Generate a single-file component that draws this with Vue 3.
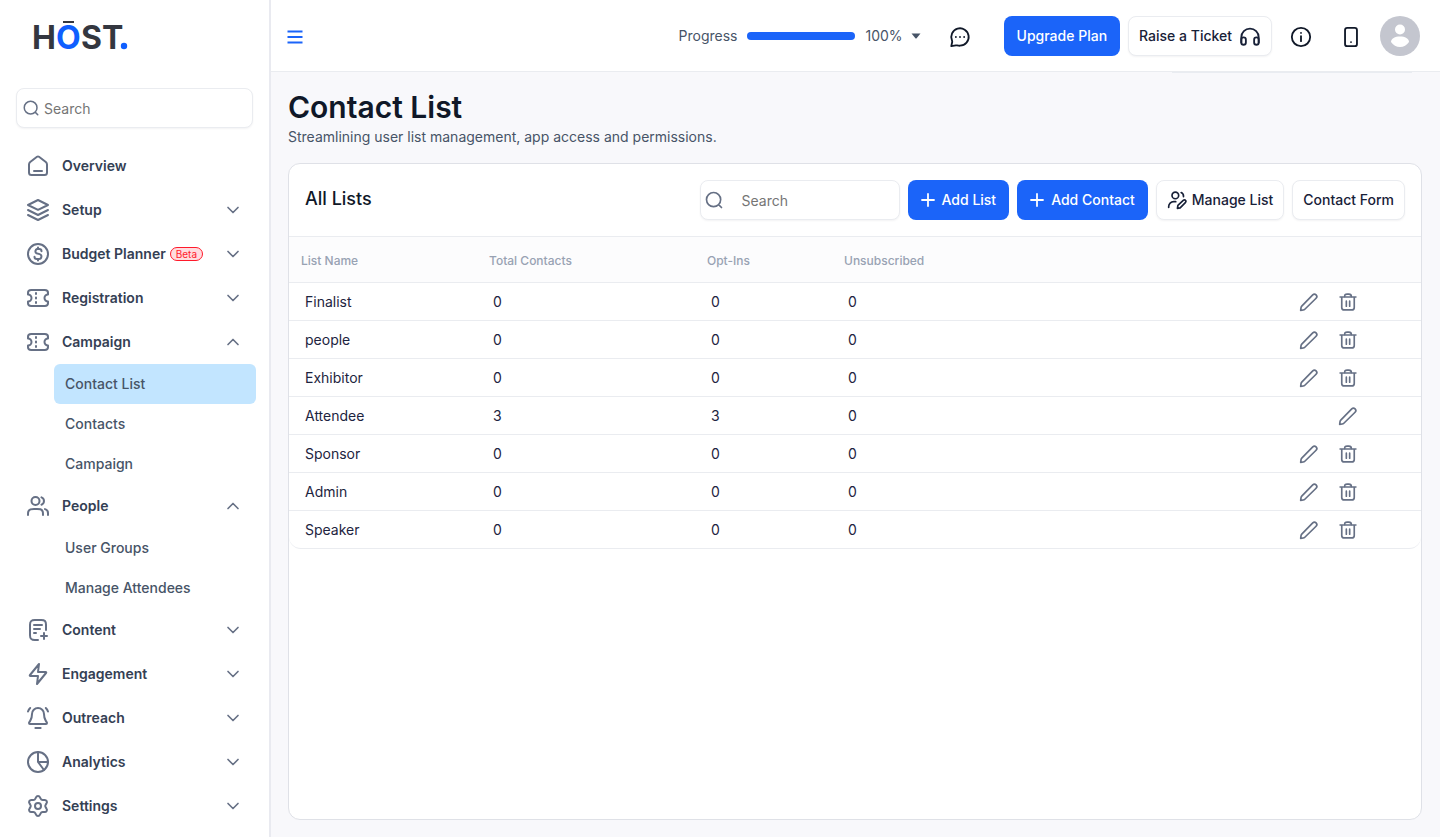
<template>
  <div class="layout">
    <aside class="sidebar">
      <a href="#" class="logo" aria-label="HŌST.">
        <svg width="112" height="48" viewBox="0 0 112 48">
          <rect x="37" y="5" width="11" height="2" class="logo-ink" />
          <text x="6" y="33" class="logo-ink">H</text>
          <text x="30" y="33" class="logo-accent">O</text>
          <text x="55" y="33" class="logo-ink">ST</text>
          <circle cx="98" cy="30" r="3.2" class="logo-accent" />
        </svg>
      </a>

      <div class="search side-search">
        <svg class="icon icon-sm" viewBox="0 0 24 24"><path :d="icons.search[0]" /></svg>
        <input type="text" placeholder="Search" aria-label="Search menu">
      </div>

      <nav>
        <ul class="menu">
          <li v-for="item in menu" :key="item.label">
            <button type="button" class="menu-item" @click="toggle(item)">
              <svg class="icon" viewBox="0 0 24 24">
                <path v-for="d in icons[item.icon]" :key="d" :d="d" />
              </svg>
              <span>{{ item.label }}</span>
              <span v-if="item.badge" class="badge">{{ item.badge }}</span>
              <svg v-if="item.expandable" class="icon chevron" viewBox="0 0 24 24">
                <path :d="item.open ? 'M18 15l-6-6-6 6' : 'M6 9l6 6 6-6'" />
              </svg>
            </button>
            <ul v-if="item.open" class="submenu">
              <li v-for="child in item.children" :key="child">
                <a href="#" :class="{ active: child === activePage }" @click.prevent="activePage = child">{{ child }}</a>
              </li>
            </ul>
          </li>
        </ul>
      </nav>
    </aside>

    <div class="content">
      <header class="topbar">
        <button type="button" class="burger" aria-label="Toggle menu">
          <svg class="icon" viewBox="0 0 24 24"><path :d="icons.burger[0]" /></svg>
        </button>

        <div class="progress">
          <span>Progress</span>
          <div class="progress-track">
            <div class="progress-bar" :style="{ width: progress + '%' }"></div>
          </div>
          <button type="button" class="progress-toggle">
            {{ progress }}%
            <svg width="10" height="6" viewBox="0 0 10 6"><path d="M.5 .5h9L5.6 5.2q-.6.6-1.200 0z" fill="currentColor" /></svg>
          </button>
        </div>

        <button type="button" class="icon-btn chat" aria-label="Messages">
          <svg class="icon" viewBox="0 0 24 24">
            <path v-for="d in icons.chat" :key="d" :d="d" />
          </svg>
        </button>
        <button type="button" class="btn btn-primary">Upgrade Plan</button>
        <button type="button" class="btn btn-light">
          Raise a Ticket
          <svg class="icon headphones" viewBox="0 0 24 24">
            <path v-for="d in icons.headphones" :key="d" :d="d" />
          </svg>
        </button>
        <button type="button" class="icon-btn" aria-label="Information">
          <svg class="icon" viewBox="0 0 24 24">
            <path v-for="d in icons.info" :key="d" :d="d" />
          </svg>
        </button>
        <button type="button" class="icon-btn" aria-label="Mobile app">
          <svg class="icon" viewBox="0 0 24 24">
            <path v-for="d in icons.phone" :key="d" :d="d" />
          </svg>
        </button>
        <button type="button" class="avatar" aria-label="Account">
          <svg width="40" height="40" viewBox="0 0 40 40">
            <circle cx="20" cy="20" r="20" fill="#c4c6cf" />
            <circle cx="20" cy="13.5" r="5" fill="#fff" />
            <path d="M11 26c0-3.500 4-5.500 9-5.500s9 2 9 5.500c-2 3-5.500 5-9 5s-7-2-9-5z" fill="#fff" />
          </svg>
        </button>
        <div class="account-menu"></div>
      </header>

      <main>
        <h1>Contact List</h1>
        <p class="subtitle">Streamlining user list management, app access and permissions.</p>

        <section class="card">
          <div class="card-header">
            <h2>All Lists</h2>
            <div class="search list-search">
              <svg class="icon" viewBox="0 0 24 24"><path :d="icons.search[0]" /></svg>
              <input type="text" v-model="query" placeholder="Search" aria-label="Search lists">
            </div>
            <button type="button" class="btn btn-primary add">
              <svg class="icon" viewBox="0 0 24 24"><path :d="icons.plus[0]" /></svg>
              Add List
            </button>
            <button type="button" class="btn btn-primary add">
              <svg class="icon" viewBox="0 0 24 24"><path :d="icons.plus[0]" /></svg>
              Add Contact
            </button>
            <button type="button" class="btn btn-light manage">
              <svg class="icon" viewBox="0 0 24 24">
                <path v-for="d in icons.userEdit" :key="d" :d="d" />
              </svg>
              Manage List
            </button>
            <button type="button" class="btn btn-light">Contact Form</button>
          </div>

          <table>
            <thead>
              <tr>
                <th class="col-name">List Name</th>
                <th class="col-total">Total Contacts</th>
                <th class="col-opt">Opt-Ins</th>
                <th>Unsubscribed</th>
                <th class="col-actions"></th>
              </tr>
            </thead>
            <tbody>
              <tr v-for="list in filteredLists" :key="list.name">
                <td>{{ list.name }}</td>
                <td>{{ list.total }}</td>
                <td>{{ list.optIns }}</td>
                <td>{{ list.unsubscribed }}</td>
                <td>
                  <div class="actions">
                    <button type="button" :aria-label="'Edit ' + list.name">
                      <svg class="icon" viewBox="0 0 24 24"><path :d="icons.pencil[0]" /></svg>
                    </button>
                    <button v-if="!list.locked" type="button" :aria-label="'Delete ' + list.name">
                      <svg class="icon" viewBox="0 0 24 24">
                        <path v-for="d in icons.trash" :key="d" :d="d" />
                      </svg>
                    </button>
                  </div>
                </td>
              </tr>
            </tbody>
          </table>
        </section>
      </main>
    </div>
  </div>
</template>

<script setup>
import { ref, computed } from 'vue'

const icons = {
  search: ['M21 21l-3.5-3.5M20 11.5a8.5 8.5 0 1 1-17 0 8.5 8.5 0 0 1 17 0z'],
  burger: ['M3 5.5h18M3 12h18M3 18.5h18'],
  plus: ['M12 4v16M4 12h16'],
  home: [
    'M8 17h8',
    'M11 2.8L4.2 8C3.400 8.700 3 9.300 3 10.500V18.500C3 20.200 3.800 21 5.500 21h13c1.700 0 2.500-.8 2.500-2.500v-8c0-1.200-.4-1.800-1.200-2.500L13 2.800c-.8-.6-1.200-.6-2 0z'
  ],
  layers: [
    'M12 2L2 7l10 4.8L22 7z',
    'M2 12l10 5 10-5',
    'M2 17l10 5 10-5'
  ],
  dollar: [
    'M22 12a10 10 0 1 1-20 0 10 10 0 0 1 20 0z',
    'M8.5 14.7c0 1.300 1 2.300 2.300 2.300H13a2.500 2.500 0 0 0 .6-4.900l-3.200-.8A2.500 2.500 0 0 1 11 7h2.200c1.300 0 2.300 1 2.300 2.300M12 5.500V7m0 10v1.500'
  ],
  ticket: [
    'M10 8V7m0 5.500v-1m0 5.500v-1',
    'M5.2 4h13.600c2.200 0 3.200.8 3.200 2.700v1.800a3.500 3.500 0 0 0 0 7v1.800c0 1.900-1 2.700-3.200 2.700H5.200C3 20 2 19.200 2 17.300v-1.800a3.500 3.500 0 0 0 0-7V6.700C2 4.800 3 4 5.200 4z'
  ],
  users: [
    'M22 21v-2a4 4 0 0 0-3-3.900M15.5 3.300a4 4 0 0 1 0 7.400M17 21c0-1.900 0-2.800-.3-3.500a4 4 0 0 0-2.200-2.200c-.7-.3-1.600-.3-3.500-.3H8c-1.900 0-2.800 0-3.500.3a4 4 0 0 0-2.200 2.200C2 18.200 2 19.100 2 21M13.500 7a4 4 0 1 1-8 0 4 4 0 0 1 8 0z'
  ],
  filePlus: [
    'M20 12V6.800C20 3.200 18.800 2 15.200 2H8.800C5.200 2 4 3.200 4 6.800v10.400C4 20.800 5.200 22 8.800 22H12',
    'M14 11H8m2 4H8m8-8H8M18 21v-6m-3 3h6'
  ],
  zap: ['M13 2L4 13c-.5.6-.3 1 .4 1H12l-1 8 9-11c.5-.6.3-1-.4-1H12z'],
  bell: [
    'M9.400 22h5.200',
    'M22 5.500A8 8 0 0 0 19.800 2M2 5.500A8 8 0 0 1 4.200 2',
    'M18 8A6 6 0 0 0 6 8c0 3.100-.8 5.200-1.700 6.600-1 1.600-1.400 2-1.300 2.500 0 .6.2.9 1 .9h16c.8 0 1-.3 1-.9.1-.5-.3-.9-1.300-2.500C18.800 13.200 18 11.100 18 8z'
  ],
  pie: [
    'M22 12a10 10 0 1 1-20 0 10 10 0 0 1 20 0z',
    'M12 2v10h10M12 12l6 8'
  ],
  settings: [
    'M15 12a3 3 0 1 1-6 0 3 3 0 0 1 6 0z',
    'M9.400 19.400l.6 1.300a2.200 2.200 0 0 0 4 0l.6-1.300a2.400 2.400 0 0 1 2.500-1.400l1.400.1a2.200 2.200 0 0 0 2-3.500l-.8-1.200a2.400 2.400 0 0 1 0-2.800l.8-1.200a2.200 2.200 0 0 0-2-3.500l-1.400.1a2.400 2.400 0 0 1-2.500-1.400L14 3.300a2.200 2.200 0 0 0-4 0l-.6 1.300A2.400 2.400 0 0 1 6.900 6l-1.400-.1a2.200 2.200 0 0 0-2 3.500l.8 1.200a2.400 2.400 0 0 1 0 2.800l-.8 1.200a2.200 2.200 0 0 0 2 3.500l1.400-.1a2.400 2.400 0 0 1 2.500 1.400z'
  ],
  chat: [
    'M7.500 12h.01M12 12h.01M16.500 12h.01',
    'M12 21.500a9.500 9.500 0 1 0-8.700-5.600c.3.700.3 1 .2 1.500l-1 4.600 5-.9c.5-.1.8 0 1.300.1 1 .2 2 .3 3.200.3z'
  ],
  headphones: [
    'M2.500 19v-5.500a9.500 9.500 0 0 1 19 0V19',
    'M5 13.500c1.600 0 2.500.9 2.500 2.500v3c0 1.600-.9 2.500-2.500 2.500S2.500 20.600 2.500 19v-3c0-1.600.9-2.500 2.500-2.500zM19 13.500c1.600 0 2.500.9 2.500 2.500v3c0 1.600-.9 2.500-2.500 2.500s-2.500-.9-2.500-2.500v-3c0-1.600.9-2.500 2.500-2.500z'
  ],
  info: ['M12 16.500V11M12 7.500h.01', 'M22 12a10 10 0 1 1-20 0 10 10 0 0 1 20 0z'],
  phone: ['M12 17.500h.01', 'M8 2h8q2.500 0 2.500 2.500v15q0 2.500-2.500 2.500H8q-2.500 0-2.500-2.500v-15Q5.500 2 8 2z'],
  userEdit: [
    'M2 21v-1a6 6 0 0 1 6-6h2.500M14 6.500a4 4 0 1 1-8 0 4 4 0 0 1 8 0zM17 3c2 .8 3 2.500 2.800 5',
    'M12.500 22l.6-3.500 6.400-6c1-.9 2-.9 2.700-.1.8.8.7 1.800-.2 2.700L15.800 21.500z'
  ],
  pencil: ['M2 22l.4-3c.1-.9.3-1.400.9-2L16.500 3.500a2.600 2.600 0 0 1 4 4L7 20.700c-.6.6-1.100.8-2 .9z'],
  trash: [
    'M8 5.500C8 3.200 8.700 2.500 11 2.500h2c2.300 0 3 .7 3 3',
    'M2.500 6h19M4.500 6v12.500c0 2 1 3 3 3h9c2 0 3-1 3-3V6M10 11v6M14 11v6'
  ]
}

const menu = ref([
  { label: 'Overview', icon: 'home' },
  { label: 'Setup', icon: 'layers', expandable: true },
  { label: 'Budget Planner', icon: 'dollar', badge: 'Beta', expandable: true },
  { label: 'Registration', icon: 'ticket', expandable: true },
  {
    label: 'Campaign',
    icon: 'ticket',
    expandable: true,
    open: true,
    children: ['Contact List', 'Contacts', 'Campaign']
  },
  {
    label: 'People',
    icon: 'users',
    expandable: true,
    open: true,
    children: ['User Groups', 'Manage Attendees']
  },
  { label: 'Content', icon: 'filePlus', expandable: true },
  { label: 'Engagement', icon: 'zap', expandable: true },
  { label: 'Outreach', icon: 'bell', expandable: true },
  { label: 'Analytics', icon: 'pie', expandable: true },
  { label: 'Settings', icon: 'settings', expandable: true }
])

const lists = ref([
  { name: 'Finalist', total: 0, optIns: 0, unsubscribed: 0 },
  { name: 'people', total: 0, optIns: 0, unsubscribed: 0 },
  { name: 'Exhibitor', total: 0, optIns: 0, unsubscribed: 0 },
  { name: 'Attendee', total: 3, optIns: 3, unsubscribed: 0, locked: true },
  { name: 'Sponsor', total: 0, optIns: 0, unsubscribed: 0 },
  { name: 'Admin', total: 0, optIns: 0, unsubscribed: 0 },
  { name: 'Speaker', total: 0, optIns: 0, unsubscribed: 0 }
])

const activePage = ref('Contact List')
const progress = ref(100)
const query = ref('')

const filteredLists = computed(() =>
  lists.value.filter((list) => list.name.toLowerCase().includes(query.value.toLowerCase()))
)

const toggle = (item) => {
  if (item.expandable) {
    item.open = !item.open
  }
}
</script>

<style>
body {
  background: #f8f8fb;
}
</style>

<style scoped>
* {
  box-sizing: border-box;
}

.layout {
  display: flex;
  min-height: 100vh;
  font-family: Inter, sans-serif;
  font-size: 14px;
  line-height: 20px;
  color: #101828;
}

button,
input {
  font: inherit;
  color: inherit;
}

button {
  padding: 0;
  border: none;
  background: none;
  cursor: pointer;
}

ul {
  list-style: none;
  margin: 0;
  padding: 0;
}

.icon {
  flex: none;
  width: 24px;
  height: 24px;
  fill: none;
  stroke: currentColor;
  stroke-width: 2;
  stroke-linecap: round;
  stroke-linejoin: round;
}

/* Sidebar */
.sidebar {
  flex: none;
  width: 271px;
  padding: 16px 16px 9px;
  background: #fff;
  border-right: 2px solid #e9eaf0;
}

.logo {
  display: block;
  height: 56px;
  margin: 0 0 16px 10px;
}

.logo svg {
  display: block;
}

.logo text {
  font-size: 32px;
  font-weight: 700;
}

.logo-ink {
  fill: #343740;
}

.logo-accent {
  fill: #0f5fff;
}

.search {
  display: flex;
  align-items: center;
  height: 40px;
  border: 1px solid #eaecf0;
  border-radius: 8px;
  background: #fff;
  color: #667085;
  box-shadow: 0 1px 2px rgba(16, 24, 40, 0.05);
}

.search input {
  flex: 1;
  min-width: 0;
  padding: 2px 0 0;
  border: none;
  outline: none;
  background: none;
}

.search input::placeholder {
  color: #757575;
}

.side-search {
  gap: 4px;
  margin-bottom: 16px;
  padding: 0 5px;
}

.icon-sm {
  width: 18px;
  height: 18px;
}

.menu-item {
  display: flex;
  align-items: center;
  width: 100%;
  height: 44px;
  padding: 0 10px;
  font-weight: 600;
  color: #344054;
}

.menu-item .icon {
  margin-right: 12px;
  color: #667085;
}

.menu-item .chevron {
  width: 20px;
  height: 20px;
  margin: 0 0 0 auto;
}

.badge {
  margin-left: 4px;
  padding: 0 5px;
  border: 1px solid #ff1a2b;
  border-radius: 8px;
  background: #ffdcdf;
  color: #ff1a2b;
  font-size: 10px;
  font-weight: 400;
  line-height: 12px;
}

.submenu {
  margin: 0 -3px 0 38px;
}

.submenu a {
  display: block;
  height: 40px;
  padding: 10px 11px;
  border-radius: 6px;
  color: #475467;
  font-weight: 500;
  text-decoration: none;
}

.submenu a.active {
  background: #c2e5ff;
}

/* Top bar */
.content {
  flex: 1;
  min-width: 0;
  display: flex;
  flex-direction: column;
}

.topbar {
  position: relative;
  display: flex;
  align-items: center;
  gap: 8px;
  height: 72px;
  padding: 0 20px 0 14px;
  background: #fff;
  border-bottom: 1px solid #eaecf0;
}

.burger {
  display: flex;
  margin-right: auto;
  padding-top: 2px;
  color: #1b64f9;
}

.burger .icon {
  width: 20px;
  height: 20px;
  stroke-width: 2.4;
  stroke-linecap: butt;
}

.progress {
  display: flex;
  align-items: center;
  gap: 10px;
  margin-right: 10px;
  color: #475467;
}

.progress-track {
  width: 108px;
  height: 8px;
  border-radius: 4px;
  background: #eaecf0;
}

.progress-bar {
  height: 8px;
  border-radius: 4px;
  background: #1b64f9;
}

.progress-toggle {
  display: flex;
  align-items: center;
  gap: 8px;
}

.icon-btn {
  display: flex;
  align-items: center;
  justify-content: center;
  width: 42px;
  height: 40px;
  padding-top: 2px;
}

.icon-btn .icon {
  width: 22px;
  height: 22px;
}

.chat {
  margin-right: 15px;
}

.avatar {
  display: flex;
}

.account-menu {
  position: absolute;
  top: 72px;
  right: 28px;
  width: 240px;
  height: 1px;
  background: #e9ecf1;
}

.btn {
  display: flex;
  align-items: center;
  height: 40px;
  border-radius: 8px;
  font-weight: 500;
  white-space: nowrap;
}

.btn-primary {
  padding: 0 13px;
  background: #1b64f9;
  color: #fff;
}

.btn-light {
  gap: 7px;
  padding: 0 10px;
  border: 1px solid #eaecf0;
  background: #fff;
  color: #182138;
  box-shadow: 0 1px 2px rgba(16, 24, 40, 0.05);
}

.headphones {
  width: 22px;
  height: 22px;
}

.add {
  gap: 5px;
  padding-left: 11px;
}

.add .icon {
  width: 18px;
  height: 18px;
  stroke-width: 2.4;
}

.manage {
  gap: 5px;
}

.manage .icon {
  width: 20px;
  height: 20px;
}

/* Page */
main {
  flex: 1;
  display: flex;
  flex-direction: column;
  padding: 16px 18px 17px 17px;
}

h1 {
  margin: 0;
  font-size: 30px;
  line-height: 38px;
  font-weight: 600;
}

.subtitle {
  margin: 1px 0 16px;
  color: #475467;
}

.card {
  flex: 1;
  border: 1px solid #dfe1e7;
  border-radius: 12px;
  background: #fff;
  overflow: hidden;
}

.card-header {
  display: flex;
  align-items: center;
  gap: 8px;
  padding: 16px;
}

h2 {
  margin: 0 auto 0 0;
  padding-bottom: 2px;
  font-size: 18px;
  line-height: 28px;
  font-weight: 500;
}

.list-search {
  width: 200px;
}

.list-search .icon {
  width: 20px;
  height: 20px;
  margin: 0 18px 0 3px;
}

table {
  width: 100%;
  table-layout: fixed;
  border-spacing: 0;
  border-bottom: 1px solid #eaecf0;
  border-radius: 0 0 12px 12px;
}

th {
  height: 46px;
  padding: 2px 12px 0;
  border-top: 1px solid #eaecf0;
  background: #fcfcfd;
  color: #98a2b3;
  font-size: 12px;
  font-weight: 500;
  text-align: left;
}

td {
  height: 38px;
  padding: 0 16px;
  border-top: 1px solid #eaecf0;
  color: #1d2440;
}

.col-name {
  width: 188px;
}

.col-total {
  width: 218px;
}

.col-opt {
  width: 137px;
}

.col-actions {
  width: 200px;
}

.actions {
  display: flex;
  justify-content: flex-end;
  gap: 19px;
  padding-right: 47px;
  color: #667085;
}

.actions button {
  display: flex;
}

.actions .icon {
  width: 20px;
  height: 20px;
}
</style>
